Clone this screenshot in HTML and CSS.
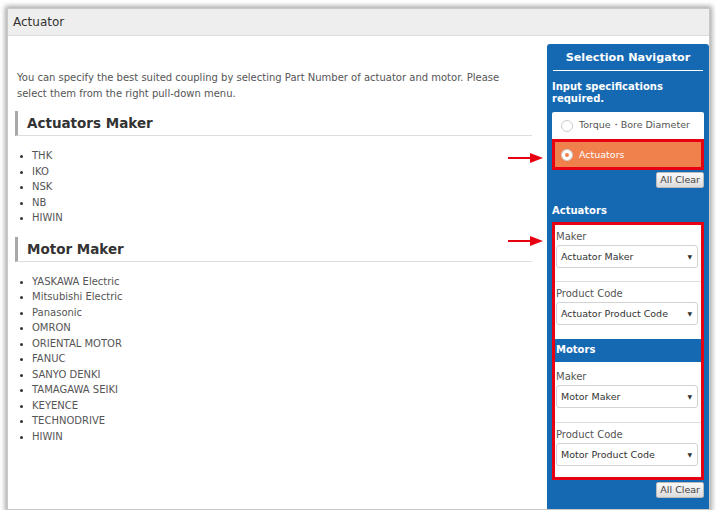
FILE: index.html
```html
<!DOCTYPE html>
<html>
<head>
<meta charset="utf-8">
<link rel="stylesheet" href="styles.css">
</head>
<body>
<div class="window">
  <div class="titlebar">Actuator</div>
  <div class="wbody">
    <div class="main">
      <p class="intro">You can specify the best suited coupling by selecting Part Number of actuator and motor. Please select them from the right pull-down menu.</p>
      <h2 class="sec">Actuators Maker</h2>
      <ul class="list">
        <li>THK</li><li>IKO</li><li>NSK</li><li>NB</li><li>HIWIN</li>
      </ul>
      <h2 class="sec">Motor Maker</h2>
      <ul class="list">
        <li>YASKAWA Electric</li><li>Mitsubishi Electric</li><li>Panasonic</li><li>OMRON</li><li>ORIENTAL MOTOR</li><li>FANUC</li><li>SANYO DENKI</li><li>TAMAGAWA SEIKI</li><li>KEYENCE</li><li>TECHNODRIVE</li><li>HIWIN</li>
      </ul>
      <svg class="arrow arrow1" width="36" height="10" viewBox="0 0 36 10"><line x1="0" y1="5" x2="26" y2="5" stroke="#e60012" stroke-width="2"/><polygon points="22,0 35,5 22,10" fill="#e60012"/></svg>
      <svg class="arrow arrow2" width="36" height="10" viewBox="0 0 36 10"><line x1="0" y1="5" x2="26" y2="5" stroke="#e60012" stroke-width="2"/><polygon points="22,0 35,5 22,10" fill="#e60012"/></svg>
    </div>
    <div class="nav">
      <div class="nav-title">Selection Navigator</div>
      <div class="nav-req">Input specifications required.</div>
      <div class="opts">
        <div class="opt"><span class="radio"></span>Torque・Bore Diameter</div>
        <div class="opt sel"><span class="radio on"></span>Actuators</div>
      </div>
      <div class="btnrow"><span class="btn">All Clear</span></div>
      <div class="nav-sub">Actuators</div>
      <div class="redbox">
        <div class="field">
          <div class="lbl">Maker</div>
          <div class="select">Actuator Maker<span class="caret">▼</span></div>
        </div>
        <div class="field last">
          <div class="lbl">Product Code</div>
          <div class="select">Actuator Product Code<span class="caret">▼</span></div>
        </div>
        <div class="bar">Motors</div>
        <div class="field after-bar">
          <div class="lbl">Maker</div>
          <div class="select">Motor Maker<span class="caret">▼</span></div>
        </div>
        <div class="field final">
          <div class="lbl">Product Code</div>
          <div class="select">Motor Product Code<span class="caret">▼</span></div>
        </div>
      </div>
      <div class="btnrow"><span class="btn">All Clear</span></div>
    </div>
  </div>
</div>
</body>
</html>
```
FILE: styles.css
```css
* { box-sizing: border-box; }
html, body { margin: 0; padding: 0; background: #fff; }
body {
  font-family: "DejaVu Sans", Verdana, sans-serif;
  font-size: 10px;
  color: #555;
}
.window {
  margin: 8px 6px 0 7px;
  width: 703px;
  height: 502px;
  border: 1px solid #c8c8c8;
  box-shadow: 0 0 5px 2px rgba(0,0,0,0.35);
  display: flex;
  flex-direction: column;
  background: #fff;
}
.titlebar {
  height: 27px;
  background: #eeeeee;
  border-bottom: 1px solid #dcdcdc;
  font-size: 12px;
  line-height: 27px;
  padding-left: 5px;
  color: #333;
}
.wbody {
  flex: 1;
  display: flex;
  gap: 15px;
  padding-top: 8px;
}
.main {
  flex: 1;
  position: relative;
  padding-left: 7px;
}
.intro {
  margin: 26px 0 9px 2px;
  line-height: 16px;
  padding-right: 20px;
}
.sec {
  margin: 0;
  font-size: 13.5px;
  font-weight: bold;
  color: #333;
  border-left: 3px solid #a8a8a8;
  border-bottom: 1px solid #dedede;
  height: 25px;
  line-height: 24px;
  padding-left: 9px;
}
.list {
  margin: 12px 0 11px 0;
  padding-left: 17px;
  line-height: 15.5px;
  color: #555;
}
.list li::marker { color: #333; font-size: 9px; }
.arrow { position: absolute; }
.arrow1 { left: 500px; top: 109px; }
.arrow2 { left: 500px; top: 192px; }
.nav {
  width: 162px;
  background: #1569b3;
  border-radius: 3px 3px 0 0;
  padding: 5px 5px 0 5px;
  color: #fff;
}
.nav-title {
  font-weight: bold;
  font-size: 11.2px;
  text-align: center;
  line-height: 18px;
  padding-bottom: 3px;
  border-bottom: 1px solid #fff;
  margin: 0 1px;
}
.nav-req {
  font-weight: bold;
  font-size: 10px;
  line-height: 12px;
  margin: 10px 0 7px 0;
}
.opts {
  background: #fff;
  border-radius: 2px;
}
.opt {
  height: 27px;
  display: flex;
  align-items: center;
  padding-left: 9px;
  color: #555;
  font-size: 9.5px;
}
.opt.sel {
  height: 31px;
  background: #f0804c;
  border: 3px solid #e60012;
  color: #fff;
  padding-left: 6px;
}
.radio {
  width: 12px; height: 12px;
  border-radius: 50%;
  border: 1px solid #ccc;
  background: #fff;
  margin-right: 6px;
  display: inline-block;
  position: relative;
}
.radio.on::after {
  content: "";
  position: absolute;
  left: 3px; top: 3px;
  width: 4px; height: 4px;
  border-radius: 50%;
  background: #f0804c;
}
.btnrow {
  display: flex;
  justify-content: flex-end;
  margin-top: 2px;
}
.btn {
  font-size: 9.5px;
  color: #444;
  background: linear-gradient(#fafafa, #dcdcdc);
  border: 1px solid #bbb;
  border-radius: 2px;
  padding: 0 3px;
  height: 16px;
  line-height: 14px;
}
.nav-sub {
  font-weight: bold;
  font-size: 10px;
  margin: 16px 0 4px 0;
  line-height: 14px;
}
.redbox {
  border: 3px solid #e60012;
  background: #fff;
}
.field {
  padding: 5px 0 0 1px;
  border-bottom: 1px solid #dedede;
  height: 57px;
}
.field.last { border-bottom: none; height: 57px; }
.field.after-bar { padding-top: 8px; height: 61px; }
.field.final { border-bottom: none; height: 54px; }
.lbl {
  font-size: 10px;
  color: #555;
  line-height: 14px;
  margin-bottom: 1px;
}
.select {
  height: 23px;
  margin-right: 3px;
  border: 1px solid #d3d3d3;
  border-radius: 3px;
  font-size: 9.5px;
  color: #333;
  line-height: 21px;
  padding-left: 4px;
  position: relative;
}
.caret {
  position: absolute;
  right: 5px;
  top: 0;
  font-size: 6px;
}
.bar {
  background: #1569b3;
  color: #fff;
  font-weight: bold;
  font-size: 10px;
  height: 23px;
  line-height: 22px;
  padding-left: 1px;
}
```
